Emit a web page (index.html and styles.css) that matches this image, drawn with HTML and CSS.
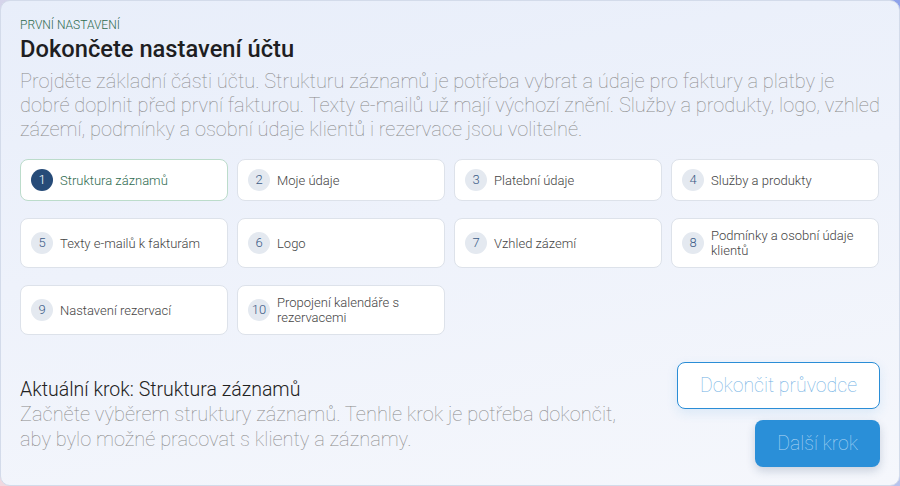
FILE: index.html
```html
<!DOCTYPE html>
<html lang="cs">
<head>
    <meta charset="UTF-8">
    <meta name="viewport" content="width=device-width, initial-scale=1.0">
    <title>První nastavení</title>
    <link rel="stylesheet" href="styles.css">
</head>
<body>
    <!-- Průvodce prvním nastavením -->
    <div class="wizard">
        <div class="eyebrow">PRVNÍ NASTAVENÍ</div>
        <h1 class="title">Dokončete nastavení účtu</h1>
        <p class="intro">Projděte základní části účtu. Strukturu záznamů je potřeba vybrat a údaje pro faktury a platby je<br>dobré doplnit před první fakturou. Texty e-mailů už mají výchozí znění. Služby a produkty, logo, vzhled zázemí, podmínky a osobní údaje klientů i rezervace jsou volitelné.</p>

        <div class="steps">
            <div class="step active"><span class="num">1</span><span class="label">Struktura záznamů</span></div>
            <div class="step"><span class="num">2</span><span class="label">Moje údaje</span></div>
            <div class="step"><span class="num">3</span><span class="label">Platební údaje</span></div>
            <div class="step"><span class="num">4</span><span class="label">Služby a produkty</span></div>
            <div class="step"><span class="num">5</span><span class="label">Texty e-mailů k fakturám</span></div>
            <div class="step"><span class="num">6</span><span class="label">Logo</span></div>
            <div class="step"><span class="num">7</span><span class="label">Vzhled zázemí</span></div>
            <div class="step"><span class="num">8</span><span class="label">Podmínky a osobní údaje klientů</span></div>
            <div class="step"><span class="num">9</span><span class="label">Nastavení rezervací</span></div>
            <div class="step"><span class="num">10</span><span class="label">Propojení kalendáře s rezervacemi</span></div>
        </div>

        <div class="current">
            <div class="current-text">
                <h2>Aktuální krok: Struktura záznamů</h2>
                <p>Začněte výběrem struktury záznamů. Tenhle krok je potřeba dokončit, aby bylo možné pracovat s klienty a záznamy.</p>
            </div>
            <div class="actions">
                <button class="btn btn-outline">Dokončit průvodce</button>
                <button class="btn btn-primary">Další krok</button>
            </div>
        </div>
    </div>
</body>
</html>
```

FILE: styles.css
```css
html, body {
    height: 100%;
}
body {
    margin: 0;
    overflow: hidden;
    font-family: Roboto, "Noto Sans", sans-serif;
    background: linear-gradient(45deg, #f1d9e0, #c9d2ef 50%, #8da1ea);
}
.wizard {
    box-sizing: border-box;
    height: 100%;
    padding: 17px 19px 18px 19px;
    border: 1px solid #d3dbea;
    border-radius: 10px;
    background: linear-gradient(170deg, #e8eefa 0%, #eef2fb 45%, #f5f7fc 100%);
    display: flex;
    flex-direction: column;
}
.eyebrow {
    font-size: 12px;
    line-height: 14px;
    font-weight: 300;
    color: #2f6b4f;
}
.title {
    margin: 3px 0 0;
    font-size: 23.7px;
    line-height: 29px;
    font-weight: 500;
    color: #1e1e22;
}
.intro {
    margin: 5px -12px 0 0;
    font-size: 20px;
    line-height: 24px;
    font-weight: 100;
    color: #8a8a8a;
}
.steps {
    margin-top: 18px;
    margin-right: 1px;
    display: grid;
    grid-template-columns: repeat(4, 1fr);
    column-gap: 9px;
    row-gap: 17px;
}
.step {
    display: flex;
    align-items: center;
    gap: 7px;
    padding: 9px 10px;
    background: #fff;
    border: 1px solid #dde2ea;
    border-radius: 8px;
}
.num {
    flex: none;
    width: 22px;
    height: 22px;
    border-radius: 50%;
    background: #e4e9f0;
    color: #3a5a86;
    font-size: 13px;
    font-weight: 300;
    line-height: 22px;
    text-align: center;
}
.label {
    font-size: 13px;
    line-height: 15px;
    font-weight: 300;
    color: #444;
}
.step.active {
    border-color: #bcdccb;
}
.step.active .num {
    background: #264b78;
    color: #fff;
}
.step.active .label {
    color: #2f6b4f;
}
.current {
    margin-top: auto;
    display: flex;
    align-items: center;
    justify-content: space-between;
}
.current-text h2 {
    margin: 0;
    font-size: 19.5px;
    line-height: 24px;
    font-weight: 300;
    color: #222;
}
.current-text p {
    margin: 0;
    width: 600px;
    font-size: 20px;
    line-height: 25px;
    font-weight: 100;
    color: #8a8a8a;
}
.actions {
    display: flex;
    flex-direction: column;
    align-items: flex-end;
    gap: 11px;
}
.btn {
    height: 47px;
    padding: 0 22px;
    border-radius: 8px;
    font-family: Roboto, "Noto Sans", sans-serif;
    font-size: 19.5px;
    font-weight: 100;
    cursor: pointer;
}
.btn-outline {
    background: #fff;
    border: 1px solid #2a8dd6;
    color: #6fb0e4;
    box-shadow: 0 4px 12px rgba(42, 141, 214, 0.12);
}
.btn-primary {
    background: #2a8fd8;
    border: none;
    color: #b3d7f4;
    box-shadow: 0 4px 10px rgba(30, 60, 100, 0.2);
}
```
